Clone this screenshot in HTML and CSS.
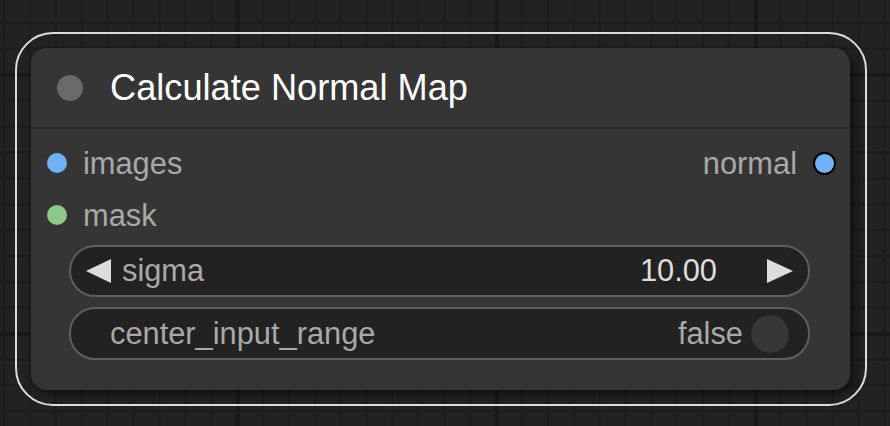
FILE: index.html
```html
<!DOCTYPE html>
<html>
<head>
<meta charset="utf-8">
<link rel="stylesheet" href="styles.css">
</head>
<body>
<div class="stage">
  <div class="selection">
    <div class="node">
      <div class="node-header">
        <span class="title-dot"></span>
        <span class="title">Calculate Normal Map</span>
      </div>
      <div class="node-content">
        <div class="slot-row">
          <div class="slot-in"><span class="dot dot-blue"></span><span class="slot-label">images</span></div>
          <div class="slot-out"><span class="slot-label">normal</span><span class="dot dot-out"></span></div>
        </div>
        <div class="slot-row">
          <div class="slot-in"><span class="dot dot-green"></span><span class="slot-label">mask</span></div>
        </div>
        <div class="widget widget-number">
          <span class="arrow arrow-left"></span>
          <span class="w-label">sigma</span>
          <span class="w-value">10.00</span>
          <span class="arrow arrow-right"></span>
        </div>
        <div class="widget widget-toggle">
          <span class="w-label">center_input_range</span>
          <span class="w-state">false</span>
          <span class="toggle"></span>
        </div>
      </div>
    </div>
  </div>
</div>
</body>
</html>
```

FILE: styles.css
```css
html, body {
  margin: 0;
  padding: 0;
  width: 890px;
  height: 426px;
  overflow: hidden;
}
body {
  background-color: #222222;
  background-image:
    linear-gradient(90deg, #191919 4px, transparent 4px),
    linear-gradient(#191919 4px, transparent 4px),
    linear-gradient(90deg, #1d1d1d 3px, transparent 3px),
    linear-gradient(#1d1d1d 3px, transparent 3px);
  background-size: 259px 100%, 100% 259px, 25.9px 100%, 100% 25.9px;
  background-position: 236px 0, 0 73px, 28.5px 0, 0 21.5px;
  font-family: "Liberation Sans", Arial, sans-serif;
}
.stage {
  padding: 32px 0 0 15px;
}
.selection {
  box-sizing: border-box;
  width: 852px;
  height: 374px;
  border: 2px solid #dcdcdc;
  border-radius: 38px;
  padding: 14px 15px 14px 14px;
}
.node {
  box-sizing: border-box;
  width: 819px;
  height: 342px;
  background: #353535;
  border-radius: 16px;
  box-shadow: 4px 4px 10px rgba(0, 0, 0, 0.55);
  display: flex;
  flex-direction: column;
}
.node-header {
  height: 79px;
  border-bottom: 2px solid #2d2d2d;
  display: flex;
  align-items: center;
  padding-left: 26px;
}
.title-dot {
  width: 26px;
  height: 26px;
  border-radius: 50%;
  background: #696969;
  margin-right: 27px;
}
.title {
  color: #ffffff;
  font-size: 36.2px;
  line-height: 36px;
  white-space: nowrap;
}
.node-content {
  padding: 8px 0 0 0;
  display: flex;
  flex-direction: column;
}
.slot-row {
  height: 52px;
  display: flex;
  align-items: center;
  justify-content: space-between;
}
.slot-in, .slot-out {
  display: flex;
  align-items: center;
}
.slot-in {
  padding-left: 16px;
}
.slot-out {
  padding-right: 14px;
}
.slot-label {
  color: #a9a9a9;
  font-size: 30.8px;
  line-height: 52px;
  padding-top: 2px;
}
.dot {
  width: 20px;
  height: 20px;
  border-radius: 50%;
}
.dot-blue {
  background: #70b2f5;
  margin-right: 16px;
}
.dot-green {
  background: #8bc98a;
  margin-right: 16px;
}
.dot-out {
  box-sizing: border-box;
  width: 23px;
  height: 23px;
  background: #70b2f5;
  border: 2px solid #000;
  margin-left: 16px;
}
.widget {
  box-sizing: border-box;
  margin-left: 38px;
  width: 741px;
  height: 52px;
  border: 2px solid #5e5e5e;
  border-radius: 26px;
  background: #222222;
  display: flex;
  align-items: center;
  font-size: 30.8px;
}
.widget-number {
  margin-top: 4px;
  padding: 0 15px;
}
.widget-toggle {
  margin-top: 10px;
  height: 53px;
  padding: 0 19px 0 39px;
}
.arrow {
  width: 0;
  height: 0;
  border-top: 12.5px solid transparent;
  border-bottom: 12.5px solid transparent;
}
.arrow-left {
  border-right: 25px solid #dddddd;
  margin-right: 11px;
}
.arrow-right {
  border-left: 26px solid #dddddd;
}
.w-label {
  color: #a9a9a9;
  flex: 1;
}
.w-value {
  color: #dddddd;
  margin-right: 50px;
}
.w-state {
  color: #a9a9a9;
  margin-right: 8px;
}
.toggle {
  width: 38px;
  height: 38px;
  border-radius: 50%;
  background: #373737;
}
```
